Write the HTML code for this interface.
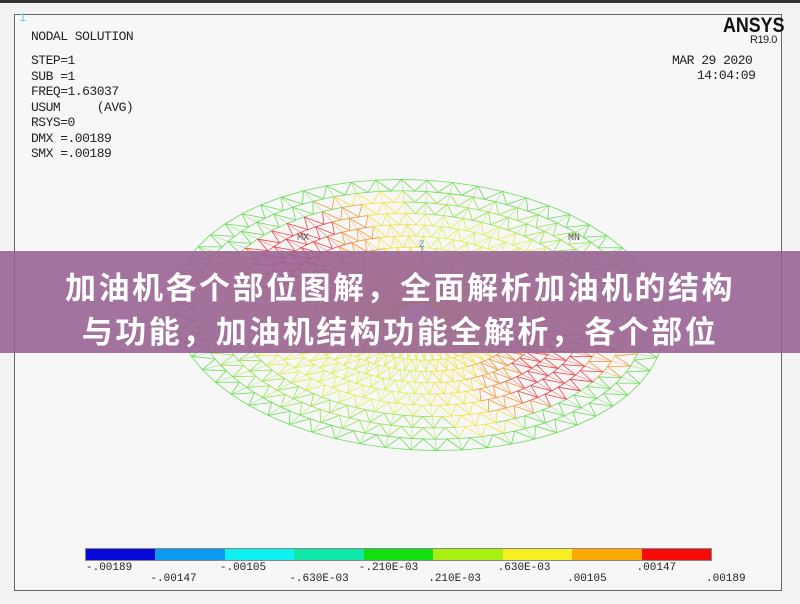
<!DOCTYPE html>
<html><head><meta charset="utf-8"><style>
html,body{margin:0;padding:0;}
body{width:800px;height:604px;background:#f3f3f3;position:relative;overflow:hidden;font-family:"Liberation Serif","DejaVu Serif",serif;}
.topbar{position:absolute;left:0;top:0;width:800px;height:3px;background:#333;}
.frame{position:absolute;left:14px;top:14px;width:768px;height:577px;border:1px solid #666;background:#f7f7f7;box-sizing:border-box;}
.t{position:absolute;font-size:13px;color:#222;white-space:pre;font-family:"Liberation Mono","DejaVu Sans Mono",monospace;letter-spacing:-0.5px;}
.band{position:absolute;left:0;top:251px;width:800px;height:102px;background:rgba(152,96,146,0.88);}
.cap{position:absolute;left:0;width:800px;text-align:center;color:#fff;font-weight:bold;font-size:31px;letter-spacing:2.5px;font-family:"Liberation Sans","Noto Sans CJK SC",sans-serif;}
.bar{position:absolute;top:549px;height:11px;}
.lb{position:absolute;font-size:11px;color:#222;font-family:"Liberation Mono",monospace;white-space:pre;}
</style></head><body>
<div class="topbar"></div>
<div class="frame"></div>
<div class="t" style="left:19px;top:11px;color:#6cd;font-size:12px">1</div>
<div class="t" style="left:31px;top:29px">NODAL SOLUTION</div>
<div class="t" style="left:31px;top:53px;line-height:15.5px">STEP=1
SUB =1
FREQ=1.63037
USUM     (AVG)
RSYS=0
DMX =.00189
SMX =.00189</div>
<div style="position:absolute;left:723px;top:14px;font-family:'Liberation Sans',sans-serif;font-weight:bold;font-size:21px;color:#111;transform:scaleX(0.85);transform-origin:left">ANSYS</div>
<div class="t" style="left:750px;top:34px;font-size:11px;font-family:'Liberation Sans',sans-serif">R19.0</div>
<div class="t" style="left:672px;top:53px">MAR 29 2020</div>
<div class="t" style="left:697px;top:68px">14:04:09</div>
<svg id="m" style="position:absolute;left:0;top:0" width="800" height="604"></svg>
<div class="band"></div>
<div class="cap" style="top:263px">加油机各个部位图解，全面解析加油机的结构</div>
<div class="cap" style="top:307px">与功能，加油机结构功能全解析，各个部位</div>
<div style="position:absolute;left:85px;top:548px;width:627px;height:13px;background:#888"></div>
<div id="bars"></div>
<div id="labels"></div>
<script>
var cols=["#0a0ad8","#0a9af0","#0ff0f0","#10e8a8","#10e010","#a8f010","#f8f020","#ffa800","#f80a0a"];
var h="",x0=86,w=(711-86)/9;
for(var i=0;i<9;i++)h+='<div class="bar" style="left:'+(x0+i*w)+'px;width:'+(w+0.5)+'px;background:'+cols[i]+'"></div>';
document.getElementById('bars').innerHTML=h;
var L=["-.00189","-.00147","-.00105","-.630E-03","-.210E-03",".210E-03",".630E-03",".00105",".00147",".00189"];
var g="";
for(var i=0;i<10;i++){var x=x0+i*w-(i==0?0:5);g+='<div class="lb" style="left:'+x+'px;top:'+(i%2?573:562)+'px">'+L[i]+'</div>';}
document.getElementById('labels').innerHTML=g;
var cx=419,cy=315,rx=246,ry=135,rot=0.06;
function P(r,a){var x=rx*r*Math.cos(a),y=ry*r*Math.sin(a);return [cx+x*Math.cos(rot)-y*Math.sin(rot),cy+x*Math.sin(rot)+y*Math.cos(rot)];}
function col(x,y){
 var d1=Math.hypot((x-300)/80,(y-245)/50),d2=Math.hypot((x-550)/80,(y-375)/50);
 var d=Math.min(d1,d2);
 var rr=Math.hypot((x-cx)/rx,(y-cy)/ry);
 if(rr>0.86)return "#50d838";
 if(d<0.55)return "#e82828";if(d<0.95)return "#f08818";if(d<1.5)return "#f0e020";
 if(rr<0.7)return "#d8ec30";return "#80e030";}
var s="",R=12,A=60;
for(var k=1;k<=R;k++){var r=k/R;for(var j=0;j<A;j++){var a=j/A*2*Math.PI,b=(j+1)/A*2*Math.PI;var p=P(r,a),q=P(r,b);s+='<line x1="'+p[0]+'" y1="'+p[1]+'" x2="'+q[0]+'" y2="'+q[1]+'" stroke="'+col(p[0],p[1])+'"/>';
 if(k>1){var m=P((k-1)/R,(a+b)/2);s+='<line x1="'+p[0]+'" y1="'+p[1]+'" x2="'+m[0]+'" y2="'+m[1]+'" stroke="'+col(m[0],m[1])+'"/><line x1="'+q[0]+'" y1="'+q[1]+'" x2="'+m[0]+'" y2="'+m[1]+'" stroke="'+col(m[0],m[1])+'"/>';
 var n=P((k-1)/R,a);s+='<line x1="'+p[0]+'" y1="'+p[1]+'" x2="'+n[0]+'" y2="'+n[1]+'" stroke="'+col(n[0],n[1])+'" opacity="0.5"/>';}
}}
s+='<text x="297" y="240" font-size="10" fill="#333" font-family="Liberation Mono">MX</text><text x="568" y="240" font-size="10" fill="#333" font-family="Liberation Mono">MN</text>';
s+='<line x1="422" y1="246" x2="422" y2="262" stroke="#2a6ac8"/><text x="419" y="247" font-size="9" fill="#2a6ac8">Z</text>';
document.getElementById('m').innerHTML='<g stroke-width="0.8" fill="none" opacity="0.85">'+s+'</g>';
</script>
</body></html>
